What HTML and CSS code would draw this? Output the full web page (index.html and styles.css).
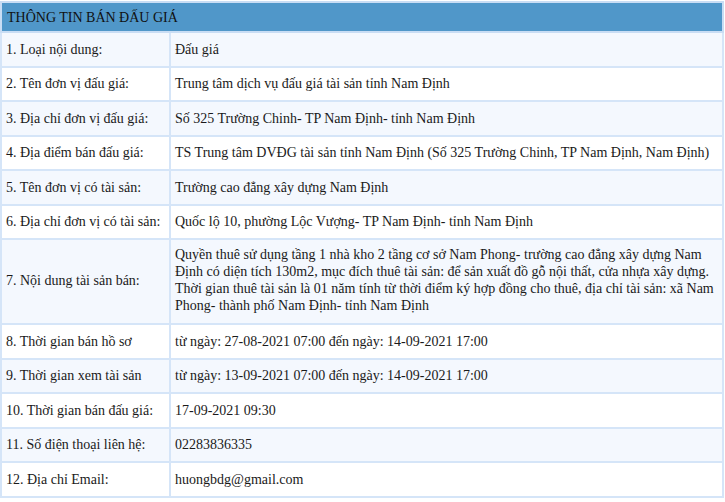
FILE: index.html
```html
<!DOCTYPE html>
<html lang="vi">
<head>
<meta charset="utf-8">
<title>Thông tin bán đấu giá</title>
<link rel="stylesheet" href="styles.css">
</head>
<body>
<table class="info">
  <colgroup><col class="c1"><col class="c2"></colgroup>
  <thead>
    <tr><th colspan="2">THÔNG TIN BÁN ĐẤU GIÁ</th></tr>
  </thead>
  <tbody>
    <tr><td>1. Loại nội dung:</td><td>Đấu giá</td></tr>
    <tr><td>2. Tên đơn vị đấu giá:</td><td>Trung tâm dịch vụ đấu giá tài sản tỉnh Nam Định</td></tr>
    <tr><td>3. Địa chỉ đơn vị đấu giá:</td><td>Số 325 Trường Chinh- TP Nam Định- tỉnh Nam Định</td></tr>
    <tr><td>4. Địa điểm bán đấu giá:</td><td>TS Trung tâm DVĐG tài sản tỉnh Nam Định (Số 325 Trường Chinh, TP Nam Định, Nam Định)</td></tr>
    <tr><td>5. Tên đơn vị có tài sản:</td><td>Trường cao đẳng xây dựng Nam Định</td></tr>
    <tr><td>6. Địa chỉ đơn vị có tài sản:</td><td>Quốc lộ 10, phường Lộc Vượng- TP Nam Định- tỉnh Nam Định</td></tr>
    <tr class="tall"><td>7. Nội dung tài sản bán:</td><td>Quyền thuê sử dụng tầng 1 nhà kho 2 tầng cơ sở Nam Phong- trường cao đẳng xây dựng Nam Định có diện tích 130m2, mục đích thuê tài sản: để sản xuất đồ gỗ nội thất, cửa nhựa xây dựng. Thời gian thuê tài sản là 01 năm tính từ thời điểm ký hợp đồng cho thuê, địa chỉ tài sản: xã Nam Phong- thành phố Nam Định- tỉnh Nam Định</td></tr>
    <tr><td>8. Thời gian bán hồ sơ</td><td>từ ngày: 27-08-2021 07:00 đến ngày: 14-09-2021 17:00</td></tr>
    <tr><td>9. Thời gian xem tài sản</td><td>từ ngày: 13-09-2021 07:00 đến ngày: 14-09-2021 17:00</td></tr>
    <tr><td>10. Thời gian bán đấu giá:</td><td>17-09-2021 09:30</td></tr>
    <tr><td>11. Số điện thoại liên hệ:</td><td>02283836335</td></tr>
    <tr><td>12. Địa chỉ Email:</td><td>huongbdg@gmail.com</td></tr>
  </tbody>
</table>
</body>
</html>
```
FILE: styles.css
```css
html, body {
  margin: 0;
  padding: 0;
  background: #ffffff;
}
body {
  font-family: "Liberation Serif", "Times New Roman", serif;
  font-size: 14px;
  color: #1a1a1a;
}
.info {
  width: 724px;
  margin: 1px 0 0 0;
  border-collapse: collapse;
  table-layout: fixed;
  border: 2px solid #c9ddf4;
}
.info .c1 { width: 169px; }
.info th {
  background: #5097c9;
  color: #111;
  font-weight: normal;
  text-align: left;
  height: 28px;
  padding: 0 5px;
  border: 2px solid #c9ddf4;
  line-height: 17px;
}
.info td {
  height: 32.5px;
  padding: 0 4px;
  border: 2px solid #d5e5f8;
  line-height: 17px;
  vertical-align: middle;
}
.info tbody tr:nth-child(odd) td { background: #f4f8fe; }
.info tbody tr:nth-child(even) td { background: #ffffff; }
.info tr.tall td {
  height: auto;
  padding-top: 6px;
  padding-bottom: 9px;
}
```
